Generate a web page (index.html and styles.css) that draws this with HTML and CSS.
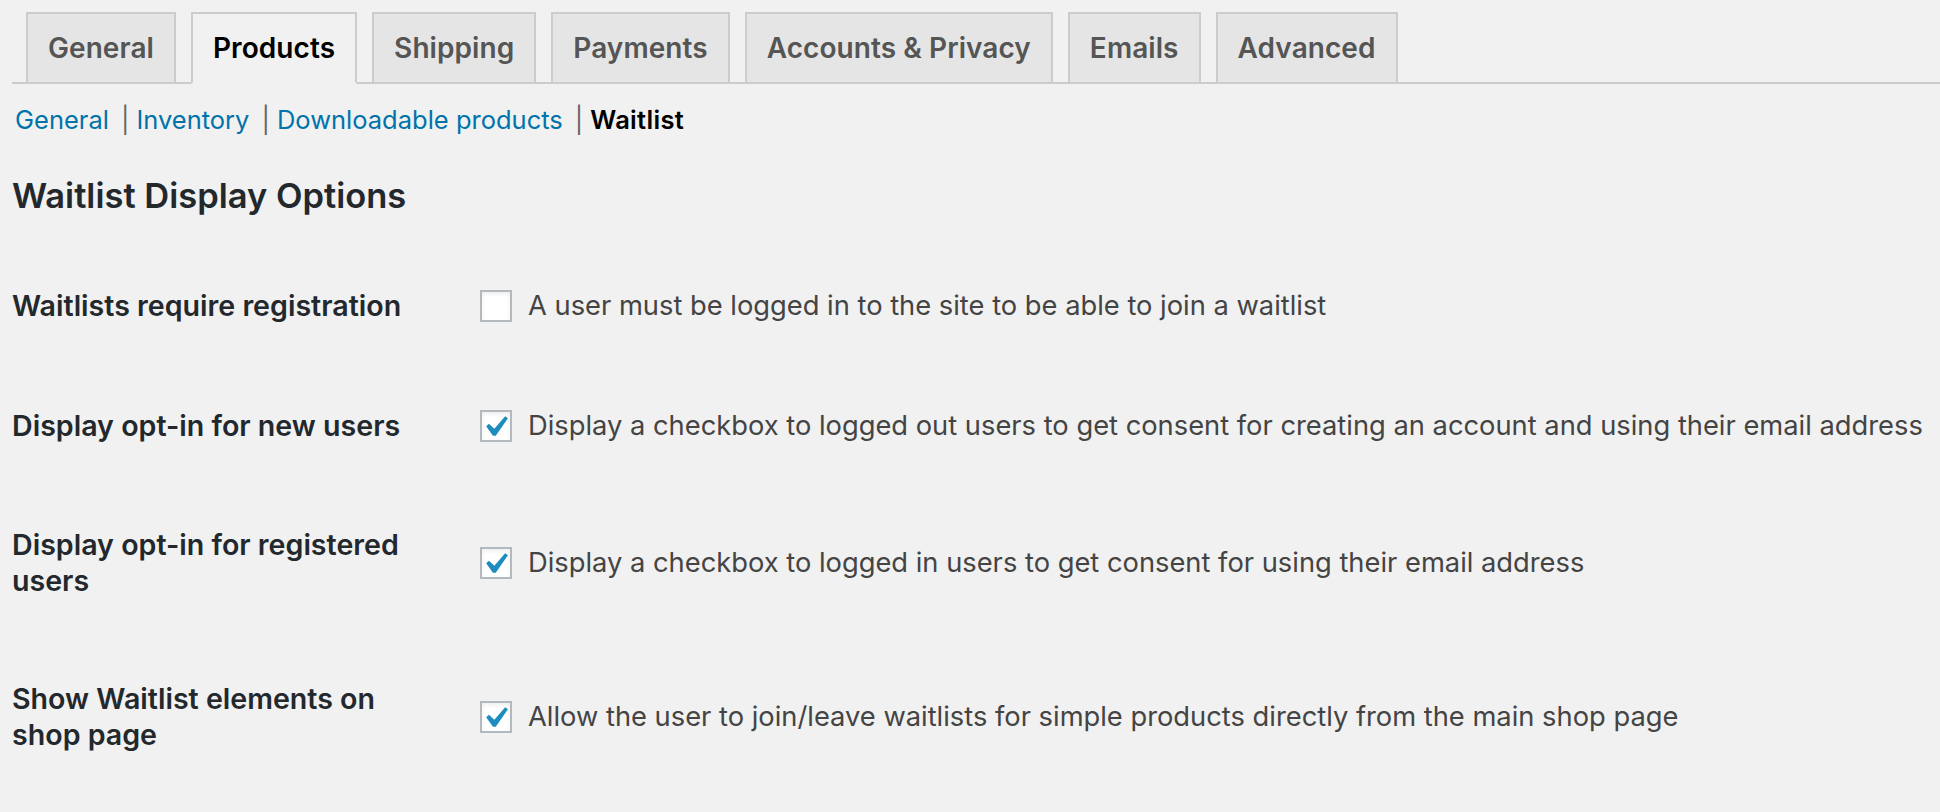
FILE: index.html
```html
<!DOCTYPE html>
<html lang="en">
<head>
<meta charset="utf-8">
<title>Products settings – Waitlist</title>
<link rel="stylesheet" href="styles.css">
</head>
<body>
<nav class="tabs">
  <a class="tab" href="#">General</a>
  <a class="tab tab-active" href="#">Products</a>
  <a class="tab" href="#">Shipping</a>
  <a class="tab" href="#">Payments</a>
  <a class="tab" href="#">Accounts &amp; Privacy</a>
  <a class="tab" href="#">Emails</a>
  <a class="tab" href="#">Advanced</a>
</nav>
<ul class="subsub">
  <li><a href="#">General</a><span class="sep">|</span></li>
  <li><a href="#">Inventory</a><span class="sep">|</span></li>
  <li><a href="#">Downloadable products</a><span class="sep">|</span></li>
  <li><a class="current" href="#">Waitlist</a></li>
</ul>
<h2 class="section-title">Waitlist Display Options</h2>
<div class="form">
  <div class="row">
    <label class="label">Waitlists require registration</label>
    <div class="field">
      <span class="checkbox"></span>
      <span class="desc">A user must be logged in to the site to be able to join a waitlist</span>
    </div>
  </div>
  <div class="row">
    <label class="label">Display opt-in for new users</label>
    <div class="field">
      <span class="checkbox checked"><svg class="check" viewBox="0 0 20 20"><path d="M14.83 4.89l1.34.94-5.81 8.38H9.02L5.78 9.67l1.34-1.25 2.57 2.4z"/></svg></span>
      <span class="desc">Display a checkbox to logged out users to get consent for creating an account and using their email address</span>
    </div>
  </div>
  <div class="row">
    <label class="label">Display opt-in for registered users</label>
    <div class="field">
      <span class="checkbox checked"><svg class="check" viewBox="0 0 20 20"><path d="M14.83 4.89l1.34.94-5.81 8.38H9.02L5.78 9.67l1.34-1.25 2.57 2.4z"/></svg></span>
      <span class="desc">Display a checkbox to logged in users to get consent for using their email address</span>
    </div>
  </div>
  <div class="row">
    <label class="label">Show Waitlist elements on shop page</label>
    <div class="field">
      <span class="checkbox checked"><svg class="check" viewBox="0 0 20 20"><path d="M14.83 4.89l1.34.94-5.81 8.38H9.02L5.78 9.67l1.34-1.25 2.57 2.4z"/></svg></span>
      <span class="desc">Allow the user to join/leave waitlists for simple products directly from the main shop page</span>
    </div>
  </div>
</div>
</body>
</html>
```
FILE: styles.css
```css
html, body {
  margin: 0;
  padding: 0;
  background: #f1f1f1;
}
body {
  font-family: Inter, "Noto Sans", sans-serif;
  color: #444;
  padding-left: 12px;
  overflow: hidden;
}
.tabs {
  display: flex;
  align-items: flex-end;
  padding-top: 12px;
  border-bottom: 2px solid #ccc;
}
.tab {
  margin-left: 15px;
  padding: 10px 20px;
  line-height: 48px;
  font-size: 28px;
  font-weight: 600;
  letter-spacing: 0.07px;
  color: #555;
  background: #e5e5e5;
  border: 2px solid #ccc;
  border-bottom: none;
  text-decoration: none;
  white-space: nowrap;
}
.tab:first-child { margin-left: 14px; }
.tab-active {
  color: #000;
  background: #f1f1f1;
  border-bottom: 2px solid #f1f1f1;
  margin-bottom: -2px;
}
.subsub {
  list-style: none;
  margin: 18px 0 0;
  padding: 0 0 0 3px;
  display: flex;
  font-size: 25.5px;
  line-height: 36px;
  color: #666;
}
.subsub a {
  color: #0073aa;
  text-decoration: none;
}
.subsub a.current {
  color: #000;
  font-weight: 600;
  letter-spacing: 0.3px;
}
.sep {
  margin: 0 7px 0 12px;
}
.section-title {
  margin: 34px 0 0;
  font-size: 34.5px;
  line-height: 47px;
  font-weight: 600;
  color: #23282d;
}
.form {
  margin-top: 27px;
}
.row {
  display: grid;
  grid-template-columns: 400px auto;
  column-gap: 68px;
  align-items: center;
  padding: 41px 0;
}
.label {
  font-size: 28.6px;
  line-height: 36px;
  font-weight: 600;
  color: #23282d;
}
.field {
  display: flex;
  align-items: center;
  gap: 16px;
  min-height: 38px;
}
.checkbox {
  position: relative;
  flex: none;
  width: 28px;
  height: 28px;
  background: #fff;
  border: 2px solid #b4b9be;
  box-shadow: inset 0 2px 4px rgba(0,0,0,0.07);
}
.check {
  position: absolute;
  left: -8px;
  top: -6px;
  width: 42px;
  height: 42px;
  fill: #1e8cbe;
}
.desc {
  font-size: 27.3px;
  line-height: 36px;
  white-space: nowrap;
}
```
